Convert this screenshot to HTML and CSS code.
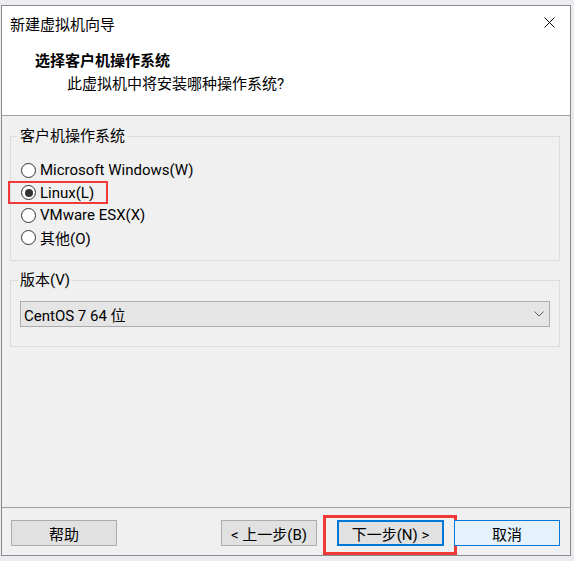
FILE: index.html
```html
<!DOCTYPE html>
<html lang="zh-CN">
<head>
<meta charset="utf-8">
<title>新建虚拟机向导</title>
<link rel="stylesheet" href="styles.css">
</head>
<body>
<div class="window">
  <div class="top">
    <div class="titlebar">
      <span class="title">新建虚拟机向导</span>
      <svg class="close" width="11" height="11" viewBox="0 0 11 11"><path d="M0.5 0.5 L10.5 10.5 M10.5 0.5 L0.5 10.5" stroke="#000" stroke-width="1" fill="none"/></svg>
    </div>
    <div class="header">
      <div class="h-title">选择客户机操作系统</div>
      <div class="h-sub">此虚拟机中将安装哪种操作系统?</div>
    </div>
  </div>
  <div class="content">
    <fieldset class="group g-os">
      <legend>客户机操作系统</legend>
      <div class="radio"><span class="dot"></span><span>Microsoft Windows(W)</span></div>
      <div class="radio checked"><span class="dot"></span><span>Linux(L)</span><span class="mark mark-linux"></span></div>
      <div class="radio"><span class="dot"></span><span>VMware ESX(X)</span></div>
      <div class="radio"><span class="dot"></span><span>其他(O)</span></div>
    </fieldset>
    <fieldset class="group g-ver">
      <legend>版本(V)</legend>
      <div class="select">
        <span>CentOS 7 64 位</span>
        <svg class="chev" width="10" height="6" viewBox="0 0 10 6"><path d="M0.5 0.5 L5 5 L9.5 0.5" stroke="#606060" stroke-width="1" fill="none"/></svg>
      </div>
    </fieldset>
  </div>
  <div class="footer">
    <div class="btn btn-help">帮助</div>
    <div class="spacer"></div>
    <div class="btn btn-prev">&lt; 上一步(B)</div>
    <div class="btn btn-next">下一步(N) &gt;<span class="mark mark-next"></span></div>
    <div class="btn btn-cancel">取消</div>
  </div>
</div>
</body>
</html>
```
FILE: styles.css
```css
* { box-sizing: border-box; }
html, body {
  margin: 0;
  padding: 0;
}
body {
  background: #eaecef;
  font-family: Roboto, "Noto Sans CJK SC", sans-serif;
  font-size: 15px;
  color: #000;
  width: 574px;
  height: 561px;
  overflow: hidden;
}
.window {
  margin: 5px 0 0 1px;
  width: 570px;
  height: 551px;
  border: 1px solid #8a8a8a;
  background: #f0f0f0;
  display: flex;
  flex-direction: column;
}
.top {
  background: #fff;
  height: 110px;
  border-bottom: 1px solid #a0a0a0;
  flex: none;
}
.titlebar {
  height: 36px;
  display: flex;
  align-items: center;
  justify-content: space-between;
  padding: 0 15px 0 8px;
}
.title {
  font-size: 15px;
  line-height: 20px;
  margin-top: 2px;
}
.close {
  display: block;
  margin-top: -3px;
}
.header {
  padding: 9px 0 0 33px;
}
.h-title {
  font-weight: bold;
  line-height: 20px;
}
.h-sub {
  line-height: 20px;
  margin-top: 3px;
  padding-left: 32px;
}
.content {
  flex: 1;
  padding-top: 10px;
}
.group {
  margin: 0 10px 0 8px;
  border: 1px solid #dcdcdc;
  padding: 0 7px;
  min-width: 0;
}
.group legend {
  padding: 0 2px;
  line-height: 20px;
}
.g-os {
  padding-top: 13px;
  padding-bottom: 11px;
}
.radio {
  position: relative;
  display: flex;
  align-items: center;
  height: 22.5px;
  white-space: nowrap;
}
.dot {
  width: 15px;
  height: 15px;
  border: 1px solid #333;
  border-radius: 50%;
  background: #fff;
  margin: 0 4px 0 3px;
  display: flex;
  align-items: center;
  justify-content: center;
  flex: none;
}
.checked .dot::after {
  content: "";
  width: 8px;
  height: 8px;
  border-radius: 50%;
  background: #333;
}
.mark {
  position: absolute;
  border: 2px solid #f03a3a;
}
.mark-linux {
  left: -10px;
  top: -1px;
  width: 100px;
  height: 23px;
}
.g-ver {
  margin-top: 9px;
  padding-top: 11px;
  padding-bottom: 19px;
}
.select {
  margin-left: 2px;
  width: 530px;
  height: 26px;
  border: 1px solid #acacac;
  background: #e5e5e5;
  display: flex;
  align-items: center;
  justify-content: space-between;
  padding: 0 5px 0 3px;
}
.chev { display: block; }
.footer {
  flex: none;
  height: 48px;
  border-top: 1px solid #a0a0a0;
  display: flex;
  align-items: flex-start;
  padding: 12px 10px 0 9px;
}
.spacer { flex: 1; }
.btn {
  position: relative;
  height: 26px;
  border: 1px solid #adadad;
  background: #e1e1e1;
  display: flex;
  align-items: center;
  justify-content: center;
  white-space: nowrap;
}
.btn-help { width: 106px; }
.btn-prev { width: 96px; }
.btn-next {
  width: 107px;
  margin-left: 20px;
  border: 2px solid #0078d7;
}
.btn-cancel {
  width: 106px;
  margin-left: 10px;
  border: 1px solid #0078d7;
  background: #e5f1fb;
}
.mark-next {
  left: -16px;
  top: -7px;
  width: 134px;
  height: 40px;
  border-width: 3px;
}
```
